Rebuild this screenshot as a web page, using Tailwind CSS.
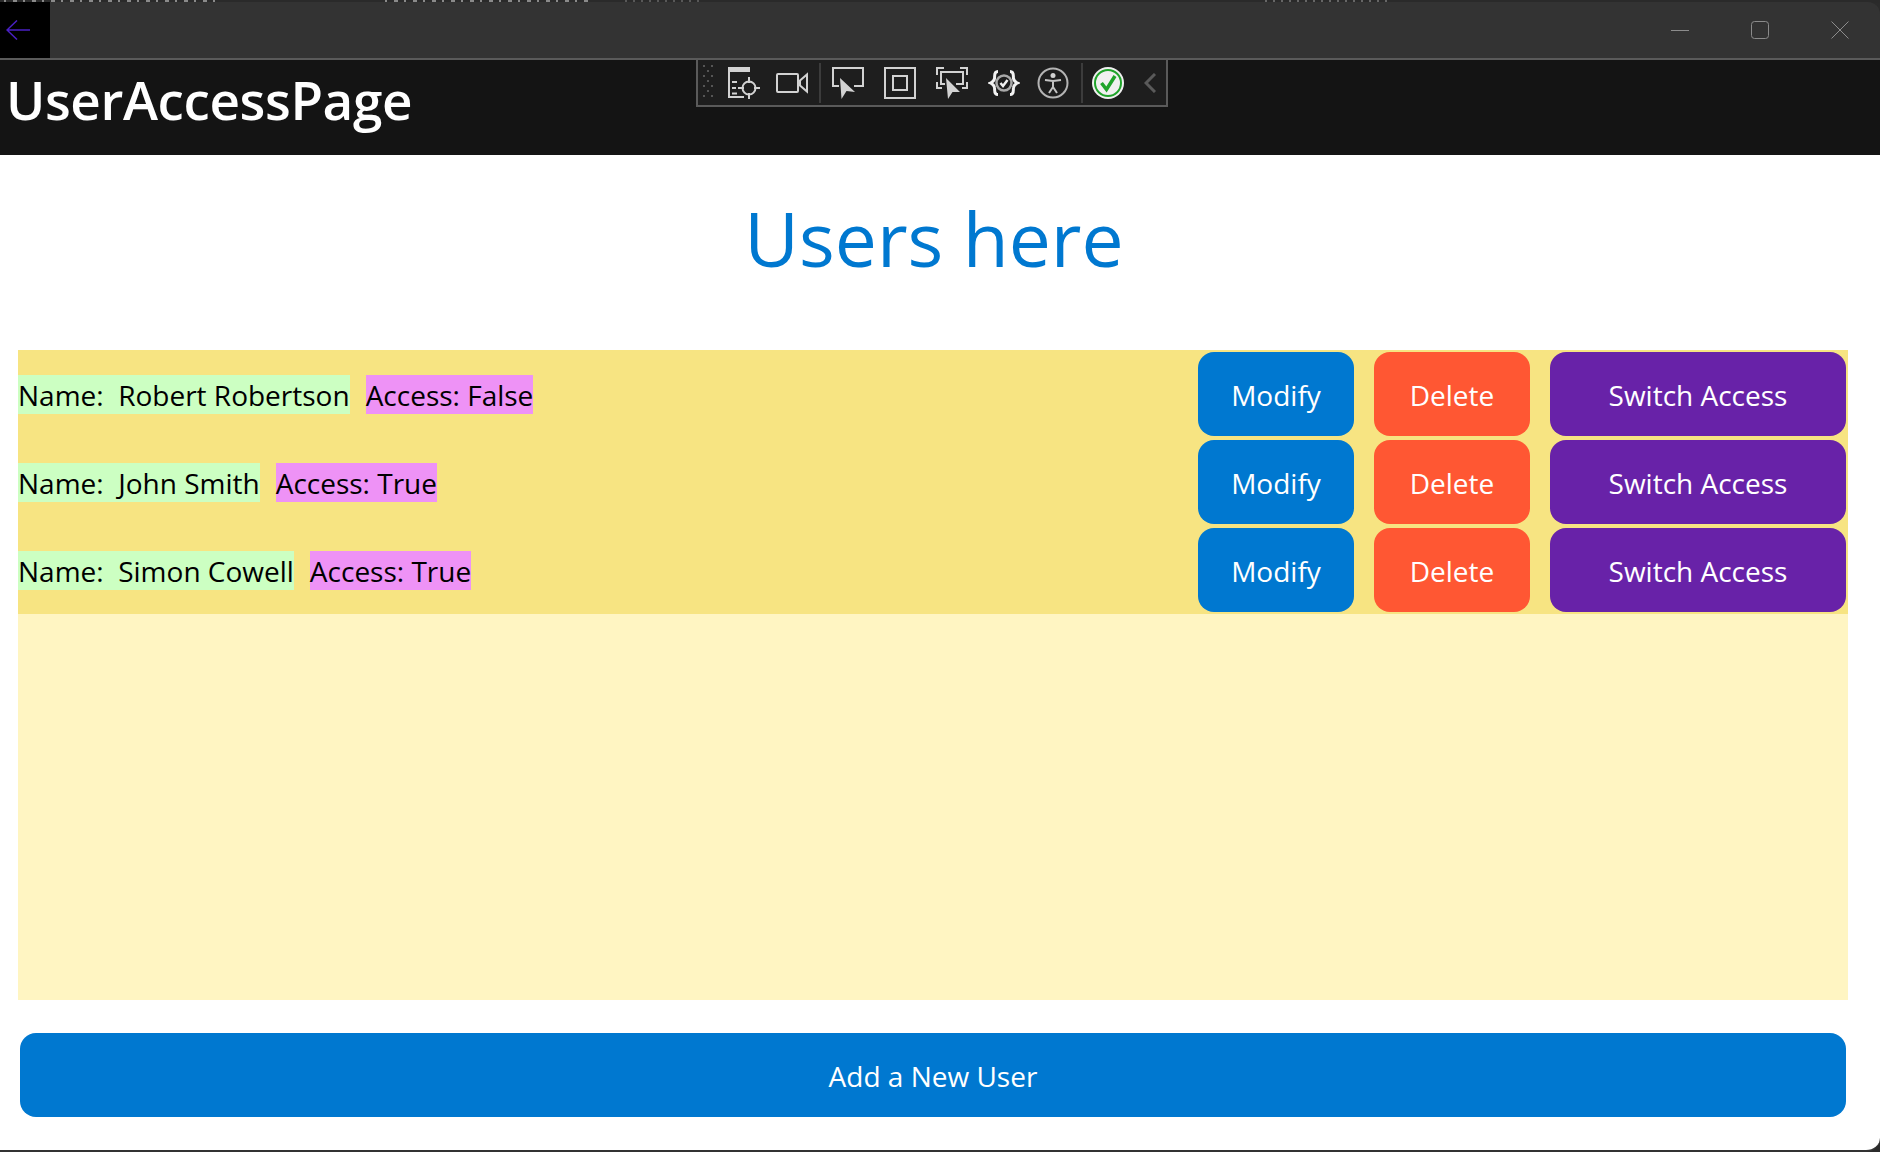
<!DOCTYPE html>
<html lang="en">
  <head>
    <meta charset="UTF-8" />
    <title>UserAccessPage</title>
    <script src="https://cdn.jsdelivr.net/npm/@tailwindcss/browser@4"></script>
  </head>
  <body class="bg-[#2b2b2b] overflow-hidden font-['Open_Sans',sans-serif]">
    <div class="relative flex flex-col w-[1880px] h-[1152px] overflow-hidden">
      <!-- sliver of the window behind, only the bottoms of its letters show -->
      <div class="flex h-[3px] bg-[#2a2a2a] -mb-px">
        <div class="ml-[4px] w-[218px] bg-[repeating-linear-gradient(90deg,#8a8a8a_0_2px,transparent_2px_9px,#8a8a8a_9px_13px,transparent_13px_19px)]"></div>
        <div class="ml-[163px] w-[205px] bg-[repeating-linear-gradient(90deg,#8a8a8a_0_2px,transparent_2px_9px,#8a8a8a_9px_13px,transparent_13px_19px)]"></div>
        <div class="ml-[35px] w-[75px] bg-[repeating-linear-gradient(90deg,#585858_0_2px,transparent_2px_8px)]"></div>
        <div class="ml-[565px] w-[125px] bg-[repeating-linear-gradient(90deg,#666666_0_2px,transparent_2px_8px)]"></div>
      </div>

      <!-- title bar -->
      <div class="flex items-stretch h-[58px] bg-[#333333] border-b-2 border-[#5a5a5a] rounded-tr-[12px] shrink-0">
        <button class="flex items-center w-[50px] pl-[6px] bg-black" aria-label="Back">
          <svg width="24" height="20" viewBox="0 0 24 20" fill="none" stroke="#4a20c4" stroke-width="1.5">
            <path d="M24 10H1M11 0.5 1 10l10 9.5" />
          </svg>
        </button>
        <div class="flex-1"></div>
        <div class="flex items-center gap-[62px] pr-[31px]">
          <svg width="18" height="18" viewBox="0 0 18 18" fill="none" stroke="#8c8c8c" stroke-width="1"><path d="M0 9.5h18" /></svg>
          <svg width="18" height="18" viewBox="0 0 18 18" fill="none" stroke="#8c8c8c" stroke-width="1"><rect x="0.5" y="0.5" width="17" height="17" rx="3" /></svg>
          <svg width="18" height="18" viewBox="0 0 18 18" fill="none" stroke="#8c8c8c" stroke-width="1"><path d="M0.5 0.5l17 17M17.5 0.5l-17 17" /></svg>
        </div>
      </div>

      <!-- page header -->
      <header class="flex items-center h-[95px] bg-[#141414] shrink-0 pl-[6px]">
        <h1 class="text-white text-[53px] font-semibold leading-none -mt-[16px] tracking-[-0.4px]">UserAccessPage</h1>
      </header>

      <!-- debug toolbar -->
      <div class="absolute left-[696px] top-[58px] flex items-center w-[472px] h-[49px] bg-[#1e1e1e] border-2 border-[#5a5a5a]">
        <svg class="ml-[5px]" width="10" height="35" viewBox="0 0 10 35" fill="#555555">
          <rect x="0" y="0" width="2" height="2" /><rect x="8" y="0" width="2" height="2" />
          <rect x="4" y="5" width="2" height="2" />
          <rect x="0" y="10" width="2" height="2" /><rect x="8" y="10" width="2" height="2" />
          <rect x="4" y="15" width="2" height="2" />
          <rect x="0" y="20" width="2" height="2" /><rect x="8" y="20" width="2" height="2" />
          <rect x="4" y="25" width="2" height="2" />
          <rect x="0" y="30" width="2" height="2" /><rect x="8" y="30" width="2" height="2" />
        </svg>
        <!-- visual tree -->
        <svg class="ml-[15px]" width="32" height="32" viewBox="0 0 32 32" fill="none" stroke="#d2d2d2" stroke-width="2">
          <path fill="#d2d2d2" stroke="none" d="M0 0h22v5H2v24h14v2H0z" />
          <path d="M4 15h5M4 21h4M4 26.500h5" />
          <circle cx="21" cy="21" r="6.500" />
          <path d="M21 10v6M21 26v6M10 21h6M26 21h6" />
        </svg>
        <!-- camera -->
        <svg class="ml-[16px]" width="32" height="32" viewBox="0 0 32 32" fill="none" stroke="#d2d2d2" stroke-width="2">
          <rect x="1" y="7" width="21" height="18" rx="1" />
          <path d="M24 13.500 31 7.500v17l-7-6z" />
        </svg>
        <div class="ml-[11px] w-[2px] h-[40px] bg-[#3c3c3c]"></div>
        <!-- select element -->
        <svg class="ml-[11px]" width="32" height="32" viewBox="0 0 32 32" fill="none" stroke="#d2d2d2" stroke-width="2">
          <path d="M7 19H1V1h30v18h-9" />
          <path fill="#d2d2d2" stroke="none" d="M8 11l1.500 21 5-8 8.500 1z" />
        </svg>
        <!-- layout adorner -->
        <svg class="ml-[20px]" width="32" height="32" viewBox="0 0 32 32" fill="none" stroke="#d2d2d2" stroke-width="2">
          <rect x="1" y="1" width="30" height="30" />
          <rect x="9" y="9" width="14" height="14" />
        </svg>
        <!-- track focused -->
        <svg class="ml-[20px]" width="32" height="32" viewBox="0 0 32 32" fill="none" stroke="#d2d2d2" stroke-width="2">
          <path d="M1 8V1h7M24 1h7v7M1 15v6h5M26 21h5v-6" />
          <path d="M9 17H5V5h22v12h-7" />
          <path fill="#d2d2d2" stroke="none" d="M10 11l2 21 4.500-7 7.500 0z" />
        </svg>
        <!-- binding failures -->
        <svg class="ml-[20px]" width="32" height="32" viewBox="0 0 32 32" fill="none">
          <path stroke="#f2f2f2" stroke-width="3" d="M10 4.500C5.500 4.500 7 9 6.500 11.500 6 14.500 4.500 15 2.500 16c2 1 3.500 1.500 4 4.500.5 2.500-1 7 3.500 7M22 4.500c4.500 0 3 4.500 3.500 7 .5 3 2 3.500 4 4.500-2 1-3.500 1.500-4 4.500-.5 2.500 1 7-3.500 7" />
          <circle cx="16" cy="16" r="7.500" stroke="#a8a8a8" stroke-width="2.500" />
          <path stroke="#f2f2f2" stroke-width="2.500" d="M12.500 16l2.500 3 4.500-6" />
        </svg>
        <!-- accessibility -->
        <svg class="ml-[17px]" width="32" height="32" viewBox="0 0 32 32" fill="none" stroke="#c4c4c4" stroke-width="2">
          <circle cx="16" cy="16" r="14.500" stroke="#b4b4b4" />
          <circle cx="16" cy="8.500" r="2.500" fill="#d2d2d2" stroke="none" />
          <path d="M8 13l8 1 8-1M16 14v6M16 20l-4 6M16 20l4 6" />
        </svg>
        <div class="ml-[12px] w-[2px] h-[40px] bg-[#3c3c3c]"></div>
        <!-- no binding errors -->
        <svg class="ml-[9px]" width="32" height="32" viewBox="0 0 32 32" fill="none">
          <circle cx="16" cy="16" r="16" fill="#f0f0f0" />
          <circle cx="16" cy="16" r="13" stroke="#1fa32a" stroke-width="2" />
          <path stroke="#1fa32a" stroke-width="3.500" d="M9.500 16l5 6.500L23 9" />
        </svg>
        <svg class="ml-[20px]" width="12" height="20" viewBox="0 0 12 20" fill="none" stroke="#5a5a5a" stroke-width="3">
          <path d="M11 1 2 10l9 9" />
        </svg>
      </div>

      <!-- page content -->
      <main class="flex flex-col flex-1 bg-white border-b-2 border-[#333333] rounded-br-[14px] overflow-hidden">
        <h2 class="h-[195px] pt-[35px] pr-[12px] text-center text-[#0078d0] text-[75px] font-medium leading-[96px]">Users here</h2>

        <section class="flex flex-col h-[650px] mx-[18px] w-[1830px] bg-[#fff5c2] text-[28px] leading-[37px]">
          <div class="flex flex-col pt-[2px] pb-[2px] gap-[4px] bg-[#f7e482]">
            <div class="flex items-center h-[84px]">
              <span class="pt-[2px] bg-[#ccffc2] text-black whitespace-pre">Name:  Robert Robertson</span>
              <span class="ml-[16px] pt-[2px] bg-[#ee92f6] text-black">Access: False</span>
              <button class="ml-auto pt-[2px] w-[156px] h-[84px] rounded-[16px] bg-[#0078d0] text-white">Modify</button>
              <button class="ml-[20px] pt-[2px] w-[156px] h-[84px] rounded-[16px] bg-[#ff5733] text-white">Delete</button>
              <button class="ml-[20px] mr-[2px] pt-[2px] w-[296px] h-[84px] rounded-[16px] bg-[#6822a8] text-white">Switch Access</button>
            </div>
            <div class="flex items-center h-[84px]">
              <span class="pt-[2px] bg-[#ccffc2] text-black whitespace-pre">Name:  John Smith</span>
              <span class="ml-[16px] pt-[2px] bg-[#ee92f6] text-black">Access: True</span>
              <button class="ml-auto pt-[2px] w-[156px] h-[84px] rounded-[16px] bg-[#0078d0] text-white">Modify</button>
              <button class="ml-[20px] pt-[2px] w-[156px] h-[84px] rounded-[16px] bg-[#ff5733] text-white">Delete</button>
              <button class="ml-[20px] mr-[2px] pt-[2px] w-[296px] h-[84px] rounded-[16px] bg-[#6822a8] text-white">Switch Access</button>
            </div>
            <div class="flex items-center h-[84px]">
              <span class="pt-[2px] bg-[#ccffc2] text-black whitespace-pre">Name:  Simon Cowell</span>
              <span class="ml-[16px] pt-[2px] bg-[#ee92f6] text-black">Access: True</span>
              <button class="ml-auto pt-[2px] w-[156px] h-[84px] rounded-[16px] bg-[#0078d0] text-white">Modify</button>
              <button class="ml-[20px] pt-[2px] w-[156px] h-[84px] rounded-[16px] bg-[#ff5733] text-white">Delete</button>
              <button class="ml-[20px] mr-[2px] pt-[2px] w-[296px] h-[84px] rounded-[16px] bg-[#6822a8] text-white">Switch Access</button>
            </div>
          </div>
        </section>

        <button class="mt-[33px] ml-[20px] pt-[2px] w-[1826px] h-[84px] rounded-[16px] bg-[#0078d0] text-white text-[28px]">Add a New User</button>
      </main>
    </div>
  </body>
</html>
